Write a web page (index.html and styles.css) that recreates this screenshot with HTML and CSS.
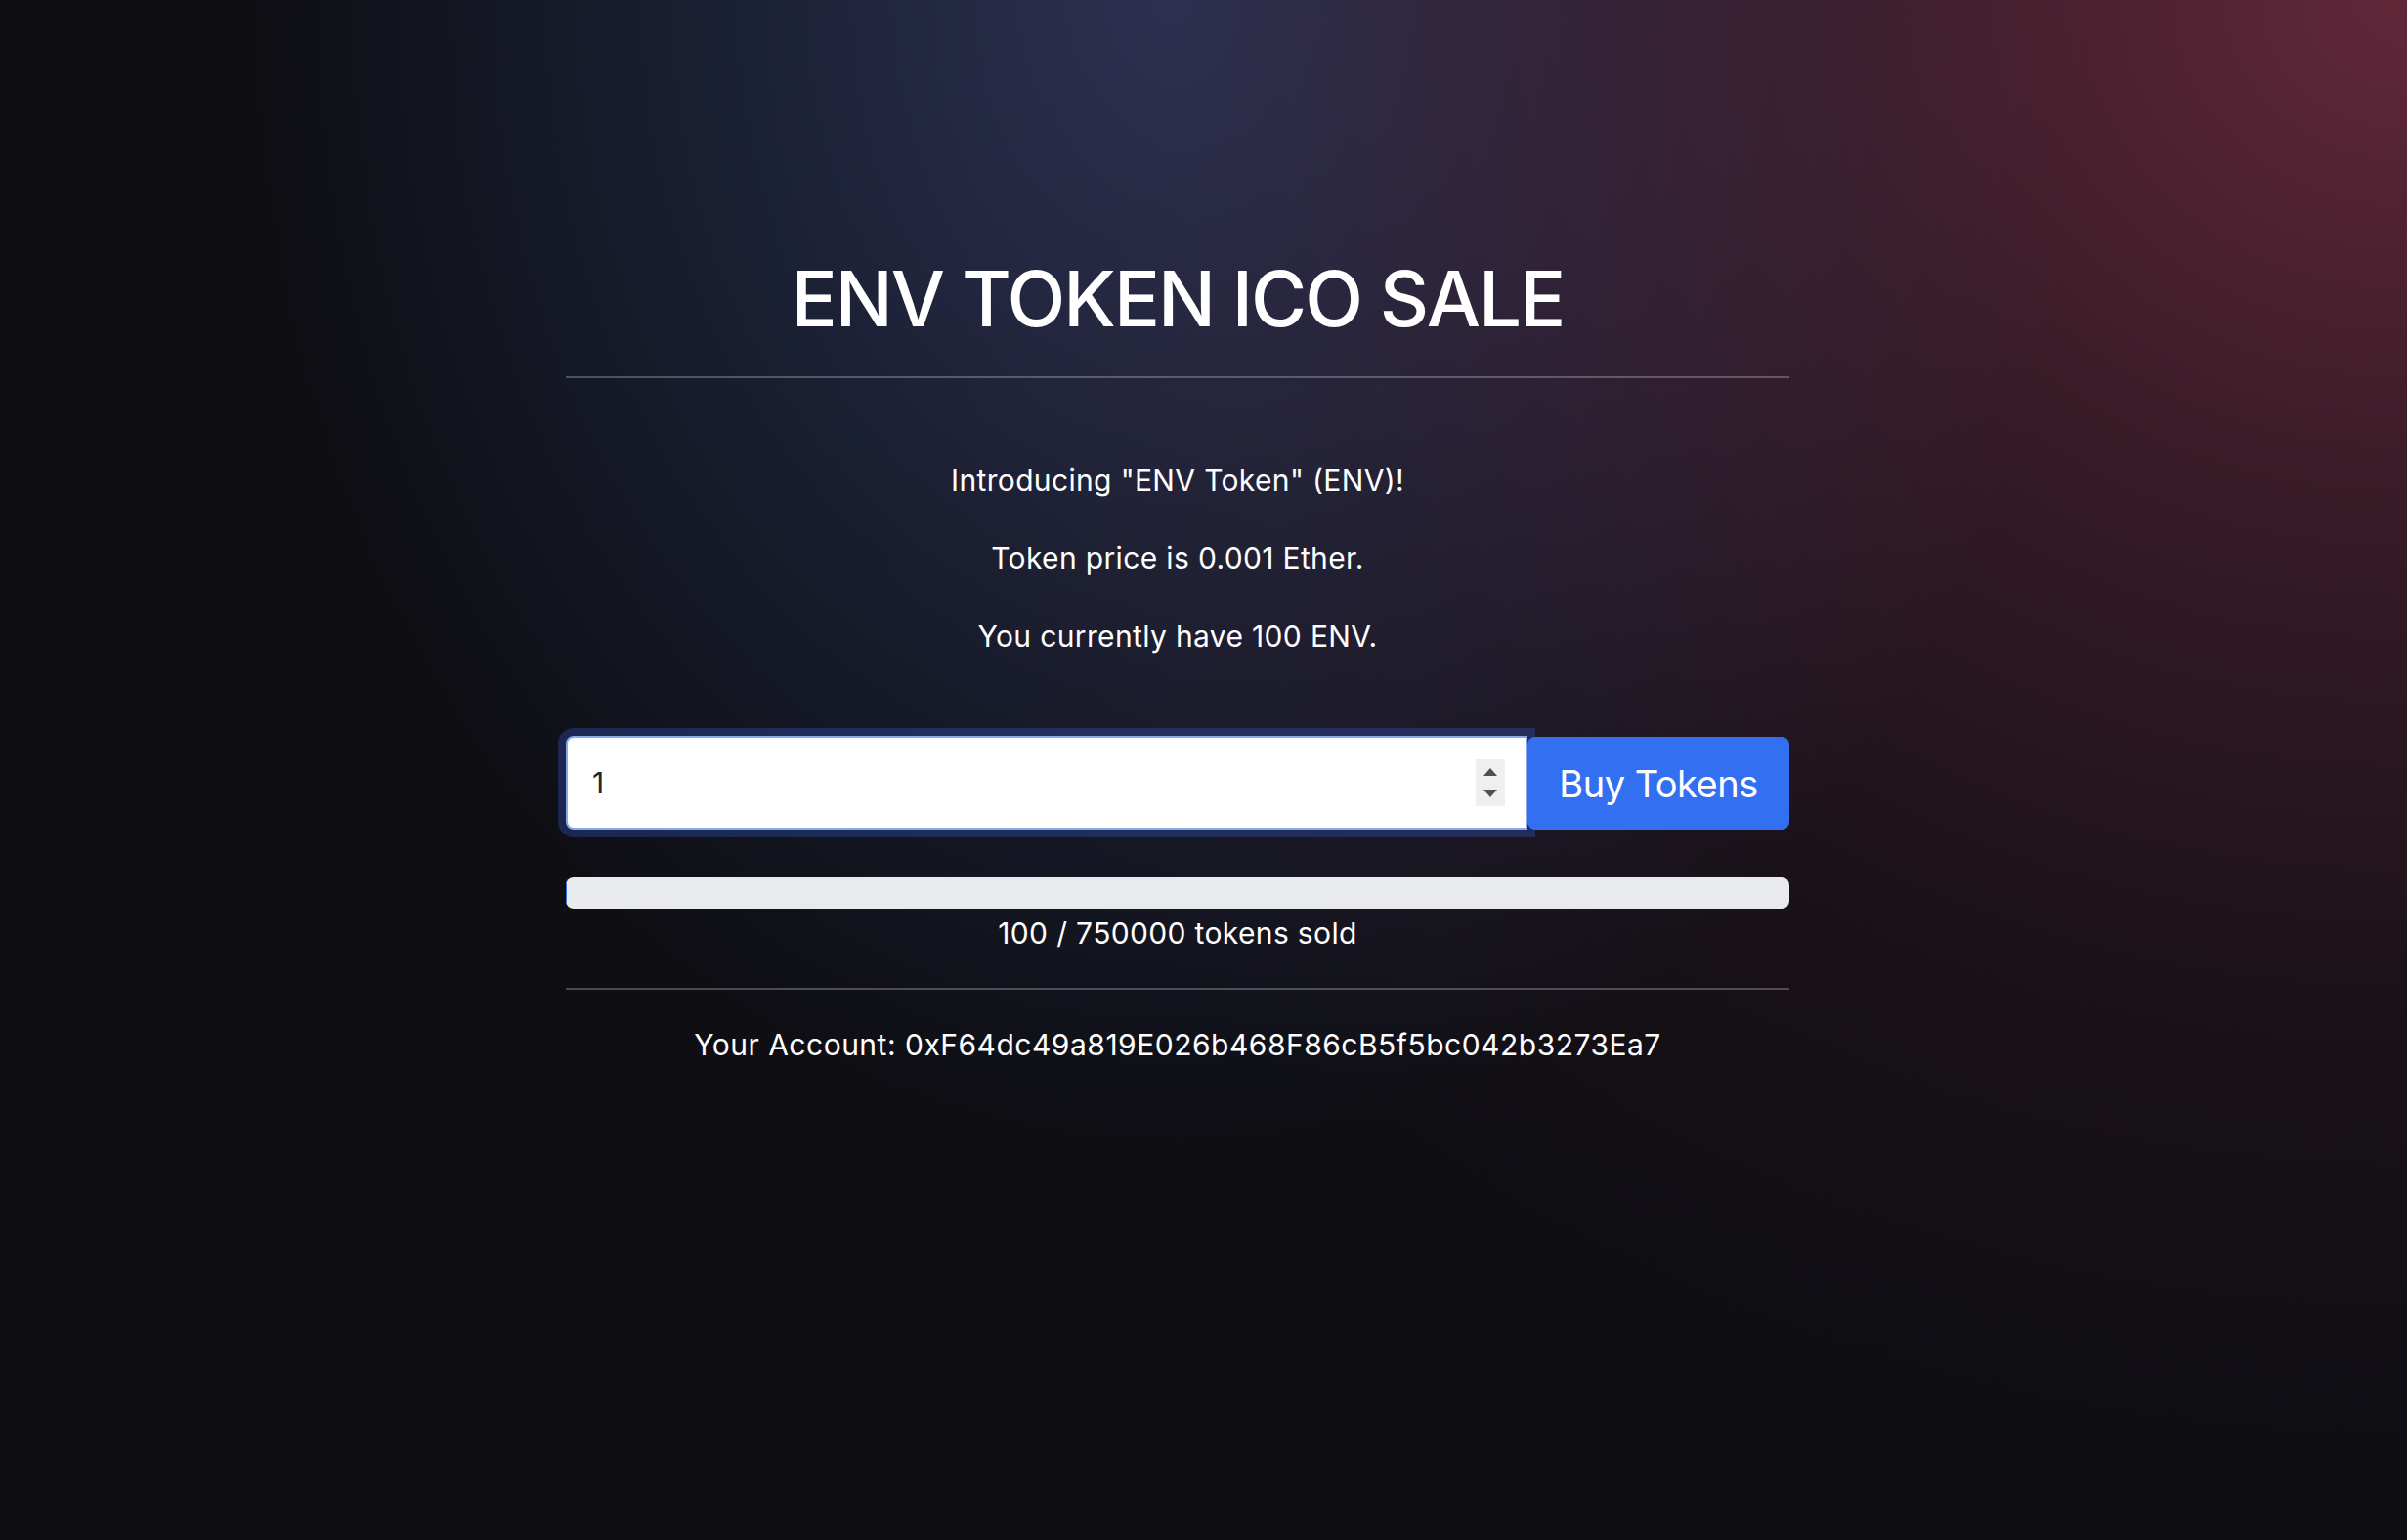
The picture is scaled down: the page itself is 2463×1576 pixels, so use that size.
FILE: index.html
```html
<!DOCTYPE html>
<html lang="en">
<head>
<meta charset="utf-8">
<title>ENV Token ICO Sale</title>
<link rel="stylesheet" href="styles.css">
</head>
<body>
<div class="wrap">
  <main class="container">
    <h1 class="title">ENV TOKEN ICO SALE</h1>
    <hr class="rule">
    <section class="intro">
      <p>Introducing "ENV Token" (ENV)!</p>
      <p>Token price is 0.001 Ether.</p>
      <p>You currently have 100 ENV.</p>
    </section>
    <form class="buy">
      <div class="field">
        <input class="amount" type="text" value="1">
        <span class="spin">
          <svg width="14" height="8" viewBox="0 0 14 8"><path d="M0 8 L7 0 L14 8 Z" fill="#505050"/></svg>
          <svg width="14" height="8" viewBox="0 0 14 8"><path d="M0 0 L14 0 L7 8 Z" fill="#505050"/></svg>
        </span>
      </div>
      <button class="btn" type="button">Buy Tokens</button>
    </form>
    <div class="progress"><div class="bar" style="width:0.013%"></div></div>
    <p class="sold">100 / 750000 tokens sold</p>
    <hr class="rule">
    <p class="account">Your Account: 0xF64dc49a819E026b468F86cB5f5bc042b3273Ea7</p>
  </main>
</div>
</body>
</html>
```

FILE: styles.css
```css
html, body {
  margin: 0;
  padding: 0;
  min-height: 100%;
}
body {
  min-height: 1576px;
  font-family: "Inter", "Liberation Sans", sans-serif;
  color: #ffffff;
  background:
    radial-gradient(ellipse 1700px 1500px at 100% 0%, rgba(98,40,58,1) 0%, rgba(98,40,58,0.5) 35%, rgba(98,40,58,0.14) 70%, rgba(98,40,58,0) 100%),
    radial-gradient(ellipse 950px 1180px at 1200px 0%, rgba(40,52,88,0.92) 0%, rgba(40,52,88,0) 100%),
    #0e0e13;
}
.wrap {
  display: flex;
  justify-content: center;
  padding-right: 53px;
}
.container {
  width: 1252px;
  padding-top: 259px;
  text-align: center;
}
.title {
  margin: 0;
  font-size: 78px;
  line-height: 94px;
  font-weight: 500;
  letter-spacing: -2px;
}
.rule {
  margin: 32px 0 0;
  border: 0;
  height: 2px;
  background: rgba(255,255,255,0.25);
}
.intro {
  padding-top: 82px;
}
.intro p, .sold, .account {
  margin: 0;
  font-size: 30px;
  line-height: 45px;
  letter-spacing: 0.35px;
}
.intro p + p {
  margin-top: 35px;
}
.buy {
  display: flex;
  margin-top: 79px;
}
.field {
  flex: 1;
  display: flex;
  align-items: center;
  height: 96px;
  box-sizing: border-box;
  background: #fff;
  border: 2px solid #86a9ef;
  border-radius: 8px 0 0 8px;
  box-shadow: 0 0 0 8px rgba(55,95,220,0.3);
  padding: 0 21px 0 25px;
}
.amount {
  flex: 1;
  min-width: 0;
  border: 0;
  outline: 0;
  background: transparent;
  font-family: "Inter", "Liberation Sans", sans-serif;
  font-size: 30px;
  color: #212529;
  padding: 0;
}
.spin {
  width: 30px;
  height: 48px;
  background: #efefef;
  display: flex;
  flex-direction: column;
  align-items: center;
  justify-content: center;
  gap: 14px;
}
.spin svg {
  display: block;
}
.btn {
  width: 268px;
  height: 95px;
  margin-top: 1px;
  border: 0;
  border-radius: 8px;
  background: #336ff1;
  color: #fff;
  font-family: "Inter", "Liberation Sans", sans-serif;
  font-size: 38px;
  letter-spacing: -0.5px;
  padding: 0;
}
.progress {
  margin-top: 49px;
  height: 32px;
  background: #e9eaee;
  border-radius: 8px;
  overflow: hidden;
}
.bar {
  height: 100%;
  background: #336ff1;
}
.sold {
  margin-top: 3px !important;
}
.sold + .rule {
  margin-top: 33px;
}
.account {
  margin-top: 34px !important;
  letter-spacing: 0.5px !important;
}
```
